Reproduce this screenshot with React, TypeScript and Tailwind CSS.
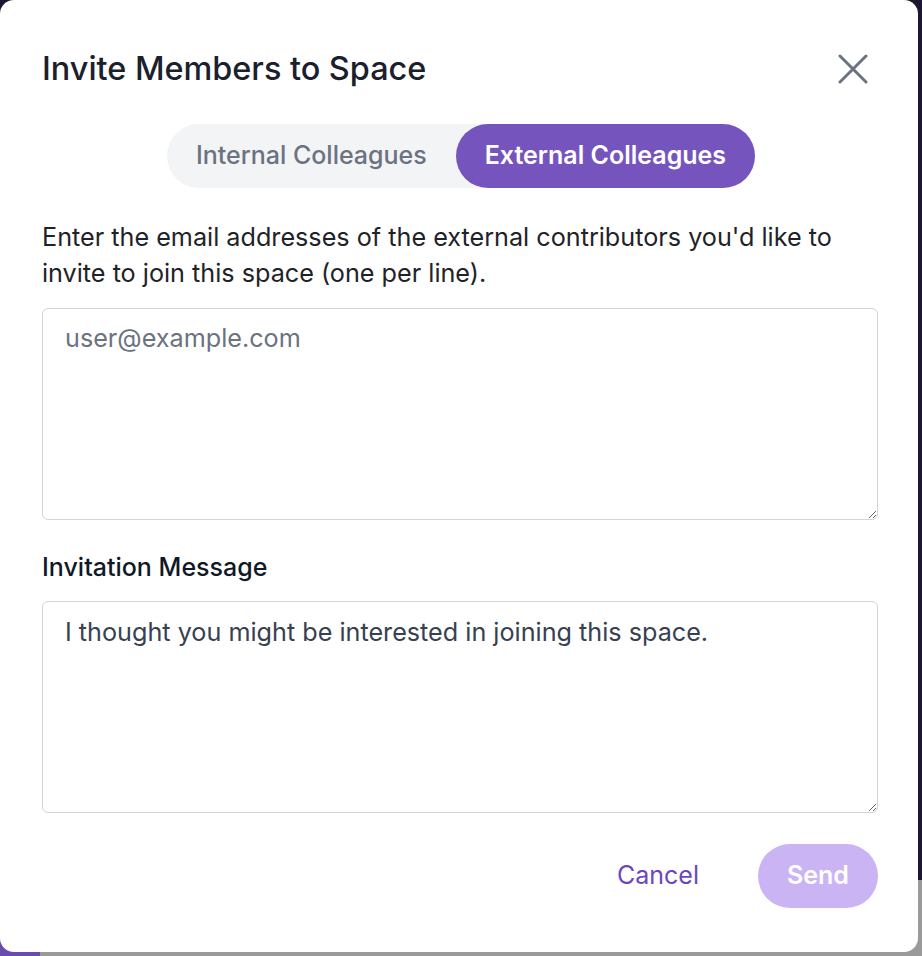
import React from "react";

export default function App() {
  return (
    <div
      className="relative w-[922px] h-[956px] overflow-hidden bg-[#9a9a9a]"
      style={{ fontFamily: "Inter, 'Noto Sans', sans-serif" }}
    >
      <div className="absolute left-0 top-0 w-[922px] h-[880px] bg-[#1e1533]" />
      <div className="absolute left-0 top-[900px] w-[40px] h-[56px] bg-[#6a4bb0]" />
      <div className="relative w-[918px] h-[952px] bg-white rounded-[14px] flex flex-col pl-[42px] pr-[40px]">
        <div className="flex items-center justify-between pt-[45px] h-[93px]">
          <h2 className="text-[32.4px] leading-[48px] font-medium text-[#1a202c]">
            Invite Members to Space
          </h2>
          <button className="w-[30px] h-[30px] flex items-center justify-center text-[#6b7280] mr-[10px]">
            <svg width="30" height="30" viewBox="0 0 30 30" fill="none" stroke="currentColor" strokeWidth="3" strokeLinecap="round">
              <path d="M2 2 L28 28 M28 2 L2 28" />
            </svg>
          </button>
        </div>
        <div className="flex justify-center mt-[31px] pl-[2px]">
          <div className="flex h-[64px] rounded-full bg-[#f3f4f6] pl-[29px]">
            <button className="h-[64px] pr-[29px] text-[25px] font-medium text-[#6b7280]">
              Internal Colleagues
            </button>
            <button className="h-[64px] px-[29px] rounded-full bg-[#7654bd] text-[25px] font-semibold text-white">
              External Colleagues
            </button>
          </div>
        </div>
        <p className="mt-[31px] text-[25.2px] leading-[36px] text-[#1f2328]">
          Enter the email addresses of the external contributors you'd like to invite to join this space (one per line).
        </p>
        <textarea
          className="mt-[17px] h-[212px] w-full rounded-[6px] border border-[#d1d5db] px-[22px] py-[11px] text-[25.2px] leading-[36px] text-[#374151] placeholder:text-[#6b7280] outline-none"
          placeholder="user@example.com"
        />
        <label className="mt-[29px] text-[25px] leading-[36px] font-medium text-[#111827]">
          Invitation Message
        </label>
        <textarea
          className="mt-[16px] h-[212px] w-full rounded-[6px] border border-[#d1d5db] px-[22px] py-[12px] text-[25.2px] leading-[36px] text-[#374151] outline-none"
          defaultValue="I thought you might be interested in joining this space."
        />
        <div className="mt-[31px] flex justify-end items-center">
          <button className="h-[64px] px-[18px] text-[25px] font-normal text-[#6b46c1]">
            Cancel
          </button>
          <button className="ml-[41px] h-[64px] w-[120px] rounded-full bg-[#cab4f4] text-[25px] font-semibold text-white">
            Send
          </button>
        </div>
      </div>
    </div>
  );
}
